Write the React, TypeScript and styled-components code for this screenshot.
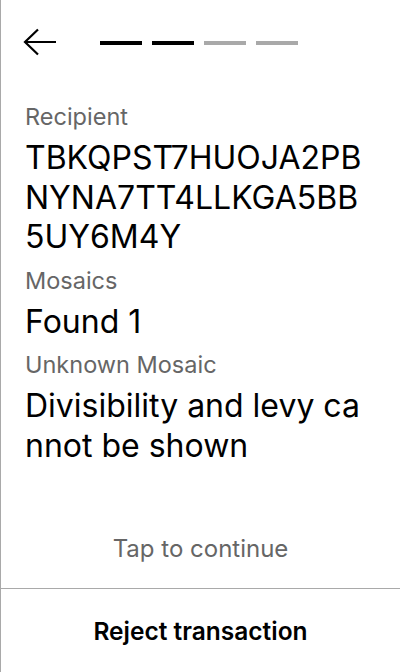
import React from "react";
import styled, { createGlobalStyle } from "styled-components";

const GlobalStyle = createGlobalStyle`
  html, body {
    margin: 0;
    padding: 0;
    background: #ffffff;
  }
  body {
    font-family: Inter, "Noto Sans", "Liberation Sans", sans-serif;
    color: #000000;
  }
`;

type Field = {
  label: string;
  value: string;
};

const fields: Field[] = [
  { label: "Recipient", value: "TBKQPST7HUOJA2PBNYNA7TT4LLKGA5BB5UY6M4Y" },
  { label: "Mosaics", value: "Found 1" },
  { label: "Unknown Mosaic", value: "Divisibility and levy cannot be shown" },
];

const steps = [true, true, false, false];

export default function App() {
  return (
    <>
      <GlobalStyle />
      <Screen>
        <Header>
          <BackButton aria-label="Back">
            <svg width="36" height="30" viewBox="0 0 36 30" fill="none">
              <path
                d="M33 14H2M15 1.5L2 14L15 26.5"
                stroke="#000"
                strokeWidth="2.2"
                strokeLinecap="butt"
              />
            </svg>
          </BackButton>
          <Steps>
            {steps.map((done, i) => (
              <Step key={i} $done={done} />
            ))}
          </Steps>
        </Header>
        <Content>
          {fields.map((f) => (
            <React.Fragment key={f.label}>
              <Label>{f.label}</Label>
              <Value>{f.value}</Value>
            </React.Fragment>
          ))}
        </Content>
        <TapHint>Tap to continue</TapHint>
        <Footer>
          <RejectButton>Reject transaction</RejectButton>
        </Footer>
      </Screen>
    </>
  );
}

const Screen = styled.div`
  display: flex;
  flex-direction: column;
  height: 672px;
  border-left: 1px solid #a9a9a9;
  box-sizing: border-box;
`;

const Header = styled.header`
  display: flex;
  align-items: center;
  height: 86px;
  padding: 0 24px 0 22px;
`;

const BackButton = styled.button`
  display: flex;
  align-items: center;
  border: none;
  background: none;
  padding: 0;
  width: 77px;
  cursor: pointer;
  svg {
    display: block;
  }
`;

const Steps = styled.div`
  display: flex;
  gap: 10px;
`;

const Step = styled.span<{ $done: boolean }>`
  width: 42px;
  height: 4px;
  background: ${(p) => (p.$done ? "#000000" : "#a9a9a9")};
`;

const Content = styled.main`
  flex: 1;
  display: flex;
  flex-direction: column;
  gap: 6px;
  padding: 16px 28px 0 24px;
`;

const Label = styled.div`
  font-size: 23.5px;
  line-height: 30px;
  color: #666666;
  &:not(:first-child) {
    margin-top: 3px;
  }
`;

const Value = styled.div`
  font-size: 32px;
  line-height: 39.5px;
  color: #000000;
  word-break: break-all;
`;

const TapHint = styled.div`
  text-align: center;
  font-size: 24px;
  line-height: 30px;
  color: #666666;
  padding-bottom: 24px;
`;

const Footer = styled.footer`
  display: flex;
  align-items: center;
  justify-content: center;
  height: 84px;
  padding-top: 1px;
  box-sizing: border-box;
  border-top: 1px solid #a9a9a9;
`;

const RejectButton = styled.button`
  border: none;
  background: none;
  font-family: inherit;
  font-size: 24.5px;
  font-weight: 600;
  color: #000000;
  cursor: pointer;
  padding: 0;
`;
